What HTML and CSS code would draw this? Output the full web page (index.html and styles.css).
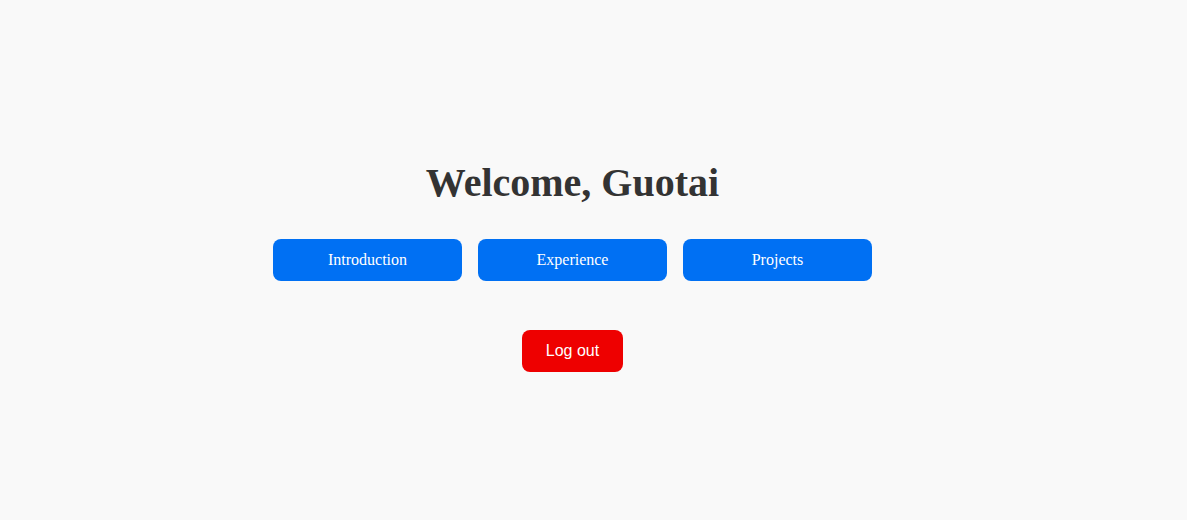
FILE: index.html
```html
<!DOCTYPE html>
<html>
<head>
<meta charset="utf-8">
<link rel="stylesheet" href="styles.css">
</head>
<body>
<main class="page">
  <h1 class="title">Welcome, Guotai</h1>
  <nav class="nav">
    <button class="nav-btn">Introduction</button>
    <button class="nav-btn">Experience</button>
    <button class="nav-btn">Projects</button>
  </nav>
  <button class="logout">Log out</button>
</main>
</body>
</html>
```
FILE: styles.css
```css
html, body {
  margin: 0;
  padding: 0;
  background: #f9f9f9;
}
body {
  font-family: "Liberation Serif", "Times New Roman", serif;
  color: #333;
}
.page {
  min-height: 520px;
  display: flex;
  flex-direction: column;
  align-items: center;
  justify-content: center;
  box-sizing: border-box;
  padding: 12px 42px 0 0;
}
.title {
  font-size: 40px;
  font-weight: bold;
  margin: 0 0 33px;
  line-height: 46px;
}
.nav {
  display: flex;
  gap: 16px;
}
.nav-btn {
  width: 189px;
  height: 42px;
  border: none;
  border-radius: 8px;
  background: #0070f3;
  color: #fff;
  font-family: "Liberation Serif", "Times New Roman", serif;
  font-size: 16px;
  padding: 0;
}
.logout {
  margin-top: 49px;
  width: 101px;
  height: 42px;
  border: none;
  border-radius: 8px;
  background: #ee0000;
  color: #fff;
  font-family: "Liberation Sans", Arial, sans-serif;
  font-size: 16px;
  padding: 0;
}
```
